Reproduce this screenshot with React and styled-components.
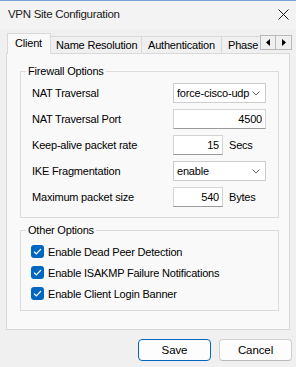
import React from "react";
import styled, { createGlobalStyle } from "styled-components";

const Global = createGlobalStyle`
  html, body { margin: 0; padding: 0; background: #f0f0f0; }
  body { font-family: "Liberation Sans", Arial, sans-serif; font-size: 11px; color: #000; }
  * { box-sizing: border-box; }
`;

const Window = styled.div`
  width: 296px;
  height: 367px;
  background: #f0f0f0;
  display: flex;
  flex-direction: column;
  overflow: hidden;
`;

const TitleBar = styled.div`
  height: 29px;
  border-top: 1px solid #7aa3d4;
  background: #f3f3f3;
  display: flex;
  align-items: center;
  justify-content: space-between;
  padding: 0 7px 2px 8px;
`;

const Title = styled.div`
  font-size: 11.5px;
  letter-spacing: -0.3px;
  color: #1b1b1b;
`;

const CloseIcon = () => (
  <svg width="11" height="11" viewBox="0 0 11 11">
    <path d="M0.5 0.5 L10.5 10.5 M10.5 0.5 L0.5 10.5" stroke="#1a1a1a" strokeWidth="1" fill="none" />
  </svg>
);

const TabStrip = styled.div`
  margin-top: 4px;
  height: 21px;
  margin-bottom: -1px;
  padding-left: 7px;
  display: flex;
  align-items: flex-start;
  position: relative;
  z-index: 1;
`;

const TabsViewport = styled.div`
  width: 253px;
  height: 21px;
  overflow: hidden;
  display: flex;
  align-items: flex-start;
  flex-shrink: 0;
`;

const Tab = styled.div`
  flex-shrink: 0;
  width: ${(p) => p.$w}px;
  height: ${(p) => (p.$active ? 21 : 17)}px;
  margin-top: ${(p) => (p.$active ? 0 : 3)}px;
  border: 1px solid #d9d9d9;
  border-bottom: none;
  border-left: ${(p) => (p.$first ? "1px solid #d9d9d9" : "none")};
  border-right: ${(p) => (p.$last ? "none" : "1px solid #d9d9d9")};
  background: ${(p) => (p.$active ? "#f9f9f9" : "#f0f0f0")};
  display: flex;
  align-items: center;
  padding-left: ${(p) => p.$pl}px;
  padding-bottom: ${(p) => (p.$active ? 2 : 0)}px;
  white-space: nowrap;
  letter-spacing: -0.2px;
`;

const ScrollButtons = styled.div`
  margin-top: 2px;
  display: flex;
`;

const ScrollButton = styled.div`
  width: 16px;
  height: 15px;
  border: 1px solid #b9b9b9;
  border-left: ${(p) => (p.$second ? "none" : "1px solid #b9b9b9")};
  background: #f0f0f0;
  display: flex;
  align-items: center;
  justify-content: center;
`;

const Arrow = ({ dir }) => (
  <svg width="4" height="7" viewBox="0 0 4 7">
    {dir === "left" ? <path d="M4 0 L0 3.5 L4 7 Z" fill="#000" /> : <path d="M0 0 L4 3.5 L0 7 Z" fill="#000" />}
  </svg>
);

const Panel = styled.div`
  margin: 0 6px;
  height: 277px;
  border: 1px solid #d9d9d9;
  background: #f9f9f9;
  display: flex;
  flex-direction: column;
  padding-left: 13px;
`;

const GroupBox = styled.div`
  position: relative;
  width: 259px;
  margin-top: ${(p) => p.$mt}px;
  border: 1px solid #dcdcdc;
  padding: ${(p) => p.$pad};
  display: flex;
  flex-direction: column;
  gap: ${(p) => p.$gap}px;
`;

const Legend = styled.div`
  position: absolute;
  top: -7px;
  left: 5px;
  padding: 0 2px;
  line-height: 13px;
  background: #f9f9f9;
  letter-spacing: -0.2px;
`;

const FieldRow = styled.div`
  display: grid;
  grid-template-columns: 141px auto;
  align-items: center;
  height: 20px;
  padding-left: 11px;
`;

const Label = styled.span`
  letter-spacing: -0.2px;
  white-space: nowrap;
`;

const Control = styled.div`
  display: flex;
  align-items: center;
`;

const Select = styled.div`
  width: 93px;
  height: 20px;
  background: #fff;
  border: 1px solid #cdcdcd;
  display: flex;
  align-items: center;
  justify-content: space-between;
  padding: 0 5px 0 3px;
`;

const SelectText = styled.span`
  width: 74px;
  overflow: hidden;
  white-space: nowrap;
  letter-spacing: -0.2px;
`;

const Chevron = () => (
  <svg width="8" height="5" viewBox="0 0 8 5">
    <path d="M0.5 0.5 L4 4 L7.5 0.5" stroke="#6b6b6b" strokeWidth="1" fill="none" />
  </svg>
);

const Field = styled.input`
  width: ${(p) => p.$w}px;
  height: 20px;
  background: #fff;
  border: 1px solid #d4d4d4;
  border-bottom-color: #9a9a9a;
  text-align: right;
  padding: 0 3px 0 2px;
  font: inherit;
  letter-spacing: -0.2px;
  color: #000;
  outline: none;
`;

const Unit = styled.span`
  margin-left: 6px;
  letter-spacing: -0.2px;
`;

const CheckRow = styled.label`
  display: flex;
  align-items: center;
  height: 13px;
  padding-left: 10px;
  gap: 4px;
  white-space: nowrap;
  letter-spacing: -0.2px;
`;

const CheckBox = styled.span`
  width: 13px;
  height: 13px;
  border-radius: 3px;
  background: #0067c0;
  display: flex;
  align-items: center;
  justify-content: center;
  flex-shrink: 0;
`;

const Check = () => (
  <svg width="9" height="7" viewBox="0 0 9 7">
    <path d="M1 3.6 L3.3 5.8 L8 1" stroke="#fff" strokeWidth="1.2" fill="none" />
  </svg>
);

const Footer = styled.div`
  margin-top: 9px;
  display: flex;
  justify-content: flex-end;
  gap: 8px;
  padding-right: 4px;
`;

const Button = styled.button`
  width: 73px;
  height: 22px;
  border-radius: 4px;
  background: #fdfdfd;
  border: 1px solid ${(p) => (p.$primary ? "#0067c0" : "#d0d0d0")};
  border-bottom-color: ${(p) => (p.$primary ? "#0067c0" : "#b8b8b8")};
  font: inherit;
  font-size: 11.5px;
  letter-spacing: -0.1px;
  color: #000;
  padding: 0;
`;

const tabs = [
  { name: "Client", w: 44, pl: 7, active: true },
  { name: "Name Resolution", w: 91, pl: 5 },
  { name: "Authentication", w: 80, pl: 6 },
  { name: "Phase", w: 38, pl: 6, last: true },
];

const fields = [
  { label: "NAT Traversal", type: "select", value: "force-cisco-udp" },
  { label: "NAT Traversal Port", type: "input", value: "4500", w: 93 },
  { label: "Keep-alive packet rate", type: "input", value: "15", w: 50, unit: "Secs" },
  { label: "IKE Fragmentation", type: "select", value: "enable" },
  { label: "Maximum packet size", type: "input", value: "540", w: 50, unit: "Bytes" },
];

const checks = [
  "Enable Dead Peer Detection",
  "Enable ISAKMP Failure Notifications",
  "Enable Client Login Banner",
];

export default function App() {
  return (
    <>
      <Global />
      <Window>
        <TitleBar>
          <Title>VPN Site Configuration</Title>
          <CloseIcon />
        </TitleBar>
        <TabStrip>
          <TabsViewport>
            {tabs.map((t, i) => (
              <Tab key={t.name} $w={t.w} $pl={t.pl} $active={t.active} $first={i === 0} $last={t.last}>
                {t.name}
              </Tab>
            ))}
          </TabsViewport>
          <ScrollButtons>
            <ScrollButton><Arrow dir="left" /></ScrollButton>
            <ScrollButton $second><Arrow dir="right" /></ScrollButton>
          </ScrollButtons>
        </TabStrip>
        <Panel>
          <GroupBox $mt={17} $pad="11px 0 10px 0" $gap={6}>
            <Legend>Firewall Options</Legend>
            {fields.map((f) => (
              <FieldRow key={f.label}>
                <Label>{f.label}</Label>
                <Control>
                  {f.type === "select" ? (
                    <Select>
                      <SelectText>{f.value}</SelectText>
                      <Chevron />
                    </Select>
                  ) : (
                    <Field $w={f.w} defaultValue={f.value} readOnly />
                  )}
                  {f.unit && <Unit>{f.unit}</Unit>}
                </Control>
              </FieldRow>
            ))}
          </GroupBox>
          <GroupBox $mt={12} $pad="14px 0 10px 0" $gap={8}>
            <Legend>Other Options</Legend>
            {checks.map((c) => (
              <CheckRow key={c}>
                <CheckBox><Check /></CheckBox>
                {c}
              </CheckRow>
            ))}
          </GroupBox>
        </Panel>
        <Footer>
          <Button $primary>Save</Button>
          <Button>Cancel</Button>
        </Footer>
      </Window>
    </>
  );
}
